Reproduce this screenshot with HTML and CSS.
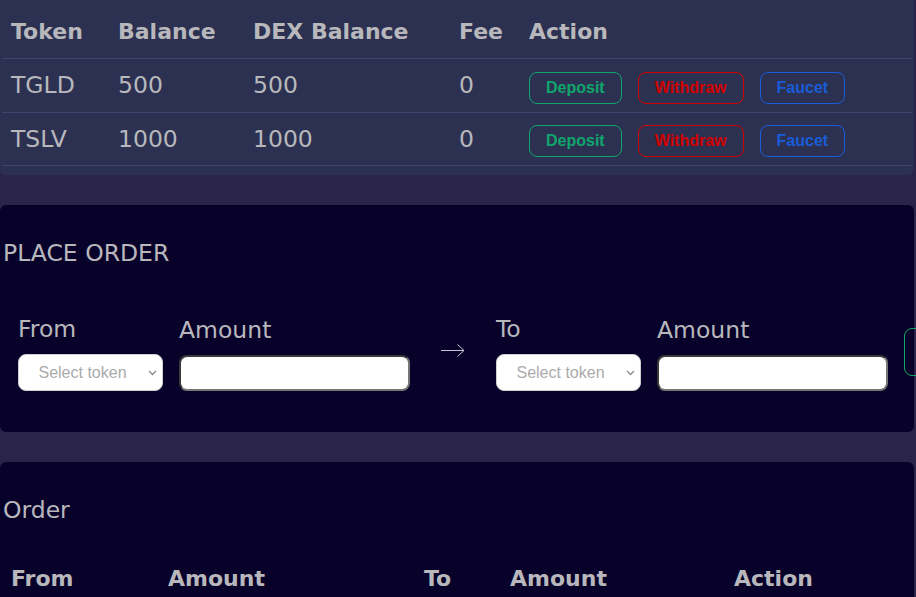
FILE: index.html
```html
<!DOCTYPE html>
<html lang="en">
<head>
<meta charset="utf-8">
<title>DEX</title>
<link rel="stylesheet" href="styles.css">
</head>
<body>
<div class="page">
  <section class="card balances">
    <div class="trow thead bal-cols">
      <div class="cell">Token</div>
      <div class="cell">Balance</div>
      <div class="cell">DEX Balance</div>
      <div class="cell">Fee</div>
      <div class="cell">Action</div>
    </div>
    <div class="trow bal-cols body-row row1">
      <div class="cell">TGLD</div>
      <div class="cell">500</div>
      <div class="cell">500</div>
      <div class="cell">0</div>
      <div class="cell actions">
        <button class="btn btn-green">Deposit</button>
        <button class="btn btn-red">Withdraw</button>
        <button class="btn btn-blue">Faucet</button>
      </div>
    </div>
    <div class="trow bal-cols body-row row2">
      <div class="cell">TSLV</div>
      <div class="cell">1000</div>
      <div class="cell">1000</div>
      <div class="cell">0</div>
      <div class="cell actions">
        <button class="btn btn-green">Deposit</button>
        <button class="btn btn-red">Withdraw</button>
        <button class="btn btn-blue">Faucet</button>
      </div>
    </div>
  </section>

  <section class="card dark place-order">
    <h2 class="card-title">PLACE ORDER</h2>
    <div class="form-row">
      <div class="field">
        <span class="field-label">From</span>
        <div class="select-wrap">
          <select class="token-select"><option>Select token</option></select>
          <svg class="chev" width="9" height="6" viewBox="0 0 9 6"><path d="M1 1 L4.5 4.5 L8 1" fill="none" stroke="#8a8a8a" stroke-width="1.3"/></svg>
        </div>
      </div>
      <div class="field">
        <span class="field-label">Amount</span>
        <input class="amount-input" type="text">
      </div>
      <svg class="arrow" width="24" height="14" viewBox="0 0 24 14"><path d="M0 6.5 H23 M16.5 0.5 L23 6.5 L16.5 12.5" fill="none" stroke="#c4c4cc" stroke-width="1"/></svg>
      <div class="field">
        <span class="field-label">To</span>
        <div class="select-wrap">
          <select class="token-select"><option>Select token</option></select>
          <svg class="chev" width="9" height="6" viewBox="0 0 9 6"><path d="M1 1 L4.5 4.5 L8 1" fill="none" stroke="#8a8a8a" stroke-width="1.3"/></svg>
        </div>
      </div>
      <div class="field">
        <span class="field-label">Amount</span>
        <input class="amount-input" type="text">
      </div>
      <button class="btn btn-green place-btn">Place</button>
    </div>
  </section>

  <section class="card dark orders">
    <h2 class="card-title">Order</h2>
    <div class="trow thead order-cols">
      <div class="cell">From</div>
      <div class="cell">Amount</div>
      <div class="cell">To</div>
      <div class="cell">Amount</div>
      <div class="cell">Action</div>
    </div>
  </section>
</div>
</body>
</html>
```

FILE: styles.css
```css
html, body {
  margin: 0;
  padding: 0;
  overflow: hidden;
}
body {
  background: #2a244b;
  font-family: "DejaVu Sans", Verdana, sans-serif;
  color: #b8b8bc;
  width: 916px;
  height: 597px;
}
.page {
  width: 914px;
}
.card {
  background: #2c3151;
  border-radius: 6px;
  padding: 0 2px;
}
.balances {
  border-radius: 0 0 6px 6px;
  padding-bottom: 9px;
}
.dark {
  background: #08022b;
}
.trow {
  display: grid;
  align-items: center;
  border-bottom: 1px solid #3e4370;
  font-size: 23.5px;
  line-height: 32px;
}
.bal-cols {
  grid-template-columns: 107px 135px 206px 70px 1fr;
}
.thead {
  font-weight: 700;
  font-size: 22px;
}
.balances .thead {
  height: 59px;
  box-sizing: border-box;
  padding-top: 5px;
}
.row1 {
  height: 53px;
}
.row2 {
  height: 52px;
}
.cell {
  padding-left: 9px;
  white-space: nowrap;
}
.body-row .cell {
  padding-bottom: 1px;
}
.body-row .actions {
  display: flex;
  gap: 16px;
  padding-top: 4px;
  padding-bottom: 0;
}
.btn {
  font-family: "Liberation Sans", Arial, sans-serif;
  font-weight: 700;
  font-size: 16px;
  height: 32px;
  padding: 0 16px;
  border-radius: 8px;
  background: transparent;
  border: 1px solid;
  cursor: pointer;
}
.btn-green {
  color: #0fa66b;
  border-color: #0fa66b;
}
.btn-red {
  color: #d10000;
  border-color: #d10000;
}
.btn-blue {
  color: #1a5cd8;
  border-color: #1a5cd8;
}
.card-title {
  margin: 0;
  font-size: 23.5px;
  font-weight: 400;
  line-height: 33px;
  padding-left: 1px;
}
.place-order {
  margin-top: 30px;
  padding-top: 32px;
  padding-bottom: 41px;
}
.form-row {
  display: flex;
  align-items: center;
  gap: 16px;
  margin-top: 43px;
  padding-left: 16px;
}
.field {
  display: flex;
  flex-direction: column;
  gap: 9px;
  flex-shrink: 0;
}
.field-label {
  font-size: 23.5px;
  line-height: 32px;
}
.select-wrap {
  position: relative;
  width: 145px;
  height: 37px;
}
.token-select {
  appearance: none;
  -webkit-appearance: none;
  width: 145px;
  height: 37px;
  background: #ffffff;
  border: 1px solid #cfcfcf;
  border-radius: 8px;
  font-family: "Liberation Sans", Arial, sans-serif;
  font-size: 16px;
  color: #ababab;
  text-align: center;
  text-align-last: center;
  padding: 0 16px 0 0;
  margin: 0;
}
.chev {
  position: absolute;
  right: 6px;
  top: 16px;
  pointer-events: none;
}
.amount-input {
  width: 231px;
  height: 36px;
  box-sizing: border-box;
  background: #ffffff;
  border: 2px solid #767676;
  border-top-color: #3a3a3a;
  border-left-color: #3a3a3a;
  border-radius: 8px;
  margin: 0;
  padding: 0 8px;
  font-size: 16px;
}
.arrow {
  flex-shrink: 0;
  margin: 0 15px;
  position: relative;
  top: -1px;
}
.place-btn {
  flex-shrink: 0;
  height: 48px;
  width: 140px;
  padding: 0 16px 0 30px;
  text-align: left;
}
.orders {
  margin-top: 30px;
  padding-top: 32px;
  height: 300px;
}
.order-cols {
  grid-template-columns: 157px 256px 86px 224px 1fr;
  border-bottom: none;
  margin-top: 36px;
}
```
